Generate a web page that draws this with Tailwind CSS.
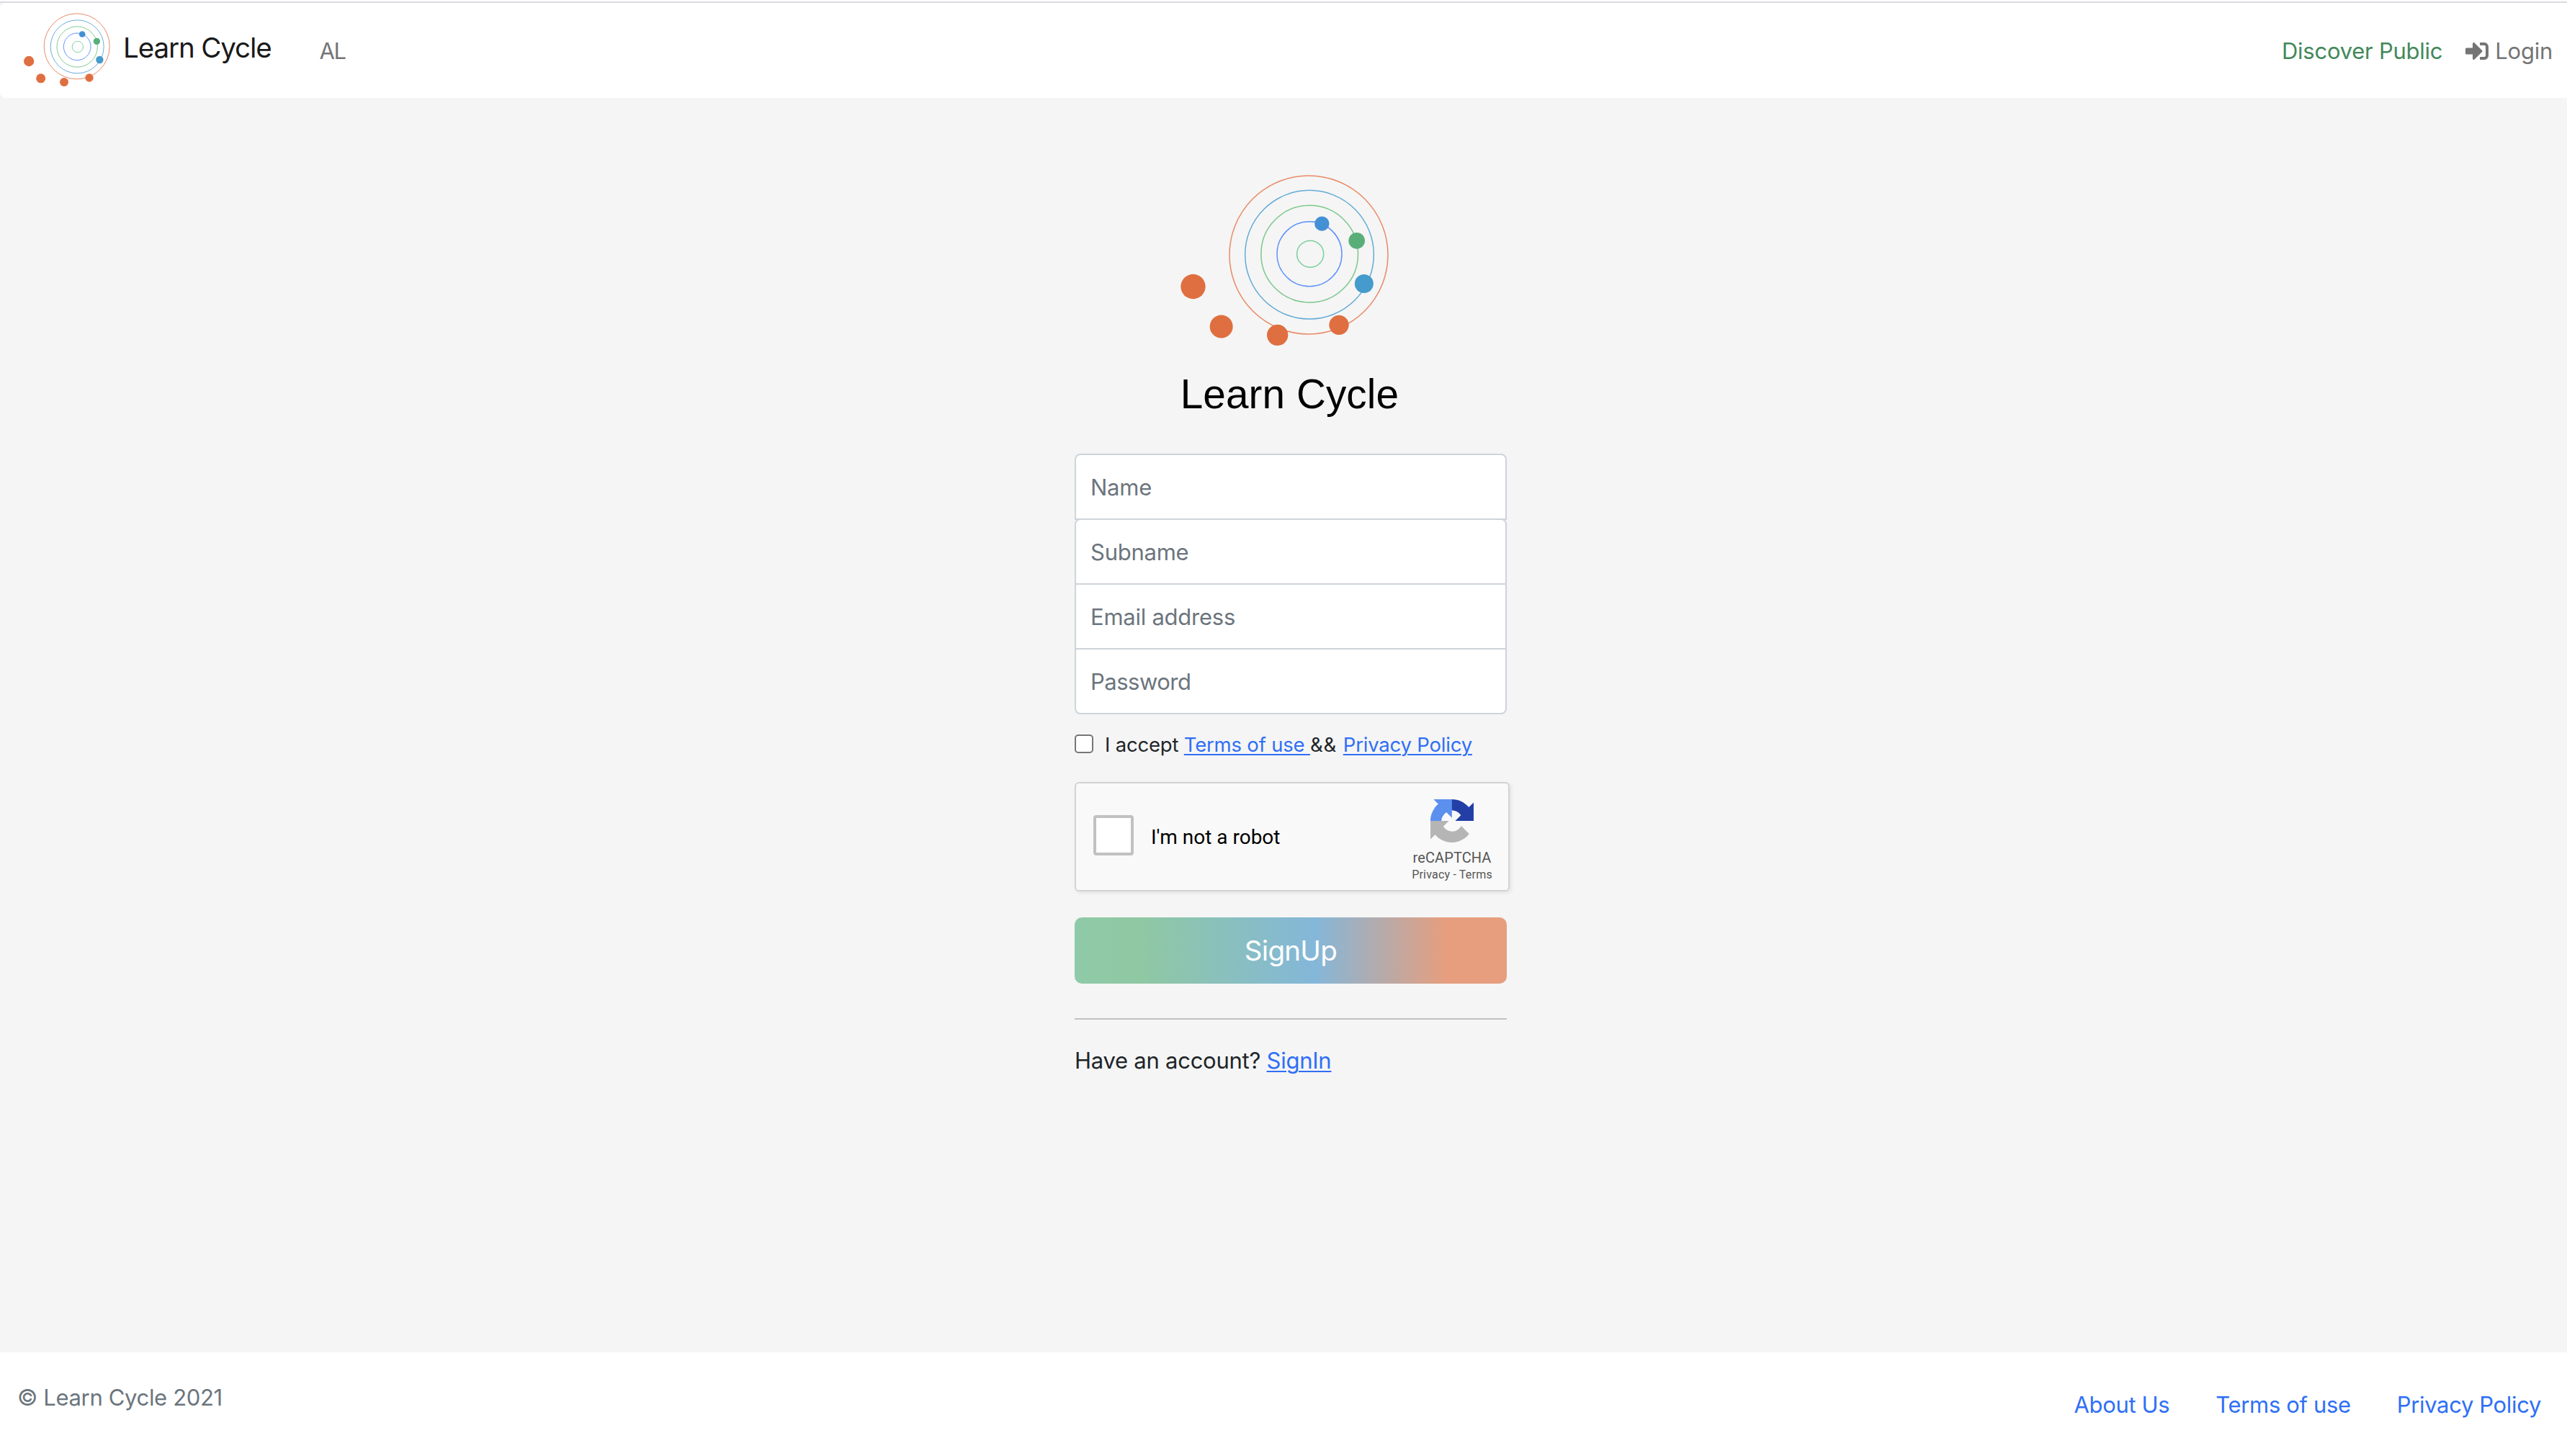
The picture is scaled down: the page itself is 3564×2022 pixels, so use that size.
<!DOCTYPE html>
<html lang="en">
<head>
    <meta charset="UTF-8">
    <meta name="viewport" content="width=device-width, initial-scale=1.0">
    <title>Learn Cycle</title>

    <!-- Tailwind CSS -->
    <script src="https://cdn.jsdelivr.net/npm/@tailwindcss/browser@4"></script>
</head>
<body class="flex min-h-screen flex-col bg-[#f4f4f4] font-['Inter',sans-serif] text-[31px] leading-[48px] tracking-[-0.25px] text-[#212529]">

    <!-- Top line -->
    <div class="h-1 border-b-2 border-[#dadbe3] bg-white"></div>

    <!-- Navbar -->
    <nav class="flex h-[132px] items-center rounded-l-lg bg-white pt-px pr-[20px] pl-[30px]">
        <a href="#" class="flex items-center">
            <svg class="mb-[4px] h-[108px] w-[126px]" viewBox="90 45 378 324" fill="none" stroke-width="3">
                <circle cx="320" cy="193" r="136.5" stroke="#e98a66" />
                <circle cx="321.5" cy="194.5" r="111" stroke="#6bb0d8" />
                <circle cx="321.5" cy="195" r="84.5" stroke="#83cc91" />
                <circle cx="321.5" cy="194.5" r="56.5" stroke="#6296fa" />
                <circle cx="323.5" cy="195" r="23" stroke="#84d4a2" />
                <circle cx="342.5" cy="142.5" r="13" fill="#4490d6" />
                <circle cx="403" cy="172" r="14" fill="#5aaf79" />
                <circle cx="415" cy="249" r="15.5" fill="#459bcb" />
                <circle cx="372" cy="324" r="17" fill="#df6f40" />
                <circle cx="267" cy="342" r="18" fill="#df6f40" />
                <circle cx="170" cy="326.5" r="19.5" fill="#df6f40" />
                <circle cx="120.5" cy="255" r="21.5" fill="#df6f40" />
            </svg>
            <span class="mb-[9px] ml-[15px] text-[38.5px] tracking-[-1.1px] text-[#1a1a1a]">Learn Cycle</span>
        </a>
        <a href="#" class="ml-[67px] tracking-[-1.5px] text-[#757575]">AL</a>

        <div class="ml-auto flex items-center">
            <a href="#" class="text-[#43895a]">Discover Public</a>
            <a href="#" class="ml-[32px] flex items-center text-[#757575]">
                <!-- Login icon -->
                <svg class="mr-[9px] h-8 w-8" viewBox="0 0 512 512" fill="currentColor">
                    <path d="M416 448h-84c-6.6 0-12-5.4-12-12v-40c0-6.6 5.4-12 12-12h84c17.7 0 32-14.3 32-32V160c0-17.7-14.3-32-32-32h-84c-6.6 0-12-5.4-12-12V76c0-6.6 5.4-12 12-12h84c53 0 96 43 96 96v192c0 53-43 96-96 96zm-47-209L201 71c-15-15-41-4.5-41 17v96H24c-13.3 0-24 10.7-24 24v96c0 13.3 10.7 24 24 24h136v96c0 21.5 26 32 41 17l168-168c9.3-9.4 9.3-24.6 0-34z" />
                </svg>
                Login
            </a>
        </div>
    </nav>

    <!-- Sign up form -->
    <main class="flex flex-1 justify-center bg-[#f5f5f5] pt-[84px] pl-5">
        <form class="w-[600px]">
            <svg class="ml-[118px] h-[380px] w-[360px]" viewBox="0 0 1080 1140" fill="none" stroke-width="4.5">
                <circle cx="621" cy="402" r="330" stroke="#e98a66" />
                <circle cx="624" cy="401" r="268" stroke="#63abd6" />
                <circle cx="624.5" cy="398" r="202" stroke="#7cc88b" />
                <circle cx="624" cy="398" r="135" stroke="#5f93f9" />
                <circle cx="627.5" cy="398" r="55.5" stroke="#79cf9a" />
                <circle cx="676" cy="272" r="30.5" fill="#4490d4" />
                <circle cx="821" cy="343" r="34" fill="#5aaf79" />
                <circle cx="851.5" cy="522" r="39" fill="#459bcb" />
                <circle cx="747" cy="694" r="41" fill="#df6f40" />
                <circle cx="491" cy="736" r="44" fill="#df6f40" />
                <circle cx="257" cy="700.5" r="48" fill="#df6f40" />
                <circle cx="139.5" cy="534" r="51.5" fill="#df6f40" />
                <text x="86" y="1042" class="fill-black font-['Liberation_Sans',Arial,sans-serif] text-[170px] tracking-[0.3px]">Learn Cycle</text>
            </svg>

            <div class="mt-[30px] flex flex-col">
                <input type="text" placeholder="Name" class="h-[92px] rounded-t-lg border-2 border-[#ced4da] bg-white px-5 placeholder:text-[#6c757d]">
                <input type="text" placeholder="Subname" class="-mt-[2px] h-[92px] rounded-t-lg border-2 border-[#ced4da] bg-white px-5 placeholder:text-[#6c757d]">
                <input type="email" placeholder="Email address" class="-mt-[2px] h-[92px] border-2 border-[#ced4da] bg-white px-5 placeholder:text-[#6c757d]">
                <input type="password" placeholder="Password" class="-mt-[2px] h-[92px] rounded-b-lg border-2 border-[#ced4da] bg-white px-5 tracking-[-0.5px] placeholder:text-[#6c757d]">
            </div>

            <!-- Terms -->
            <div class="mt-[21px] flex h-[42px] items-center text-[27.5px] leading-[42px] tracking-[-0.2px]">
                <input type="checkbox" class="mt-[-2px] mr-[16px] h-[26px] w-[26px] appearance-none rounded-[5px] border-2 border-[#767676] bg-white">
                <p class="whitespace-pre">I accept <a href="#" class="text-[#2f6ff6] underline decoration-2 underline-offset-[3px]">Terms of use </a><span class="tracking-[0.9px]">&amp;&amp; </span><a href="#" class="text-[#2f6ff6] underline decoration-2 underline-offset-[3px]">Privacy Policy</a></p>
            </div>

            <!-- reCAPTCHA -->
            <div class="mt-[31px] flex h-[152px] w-[604px] items-center rounded-md border-2 border-[#d3d3d3] bg-[#f9f9f9] pr-[19px] pl-[24px] font-['Roboto',sans-serif] tracking-normal shadow-[2px_2px_4px_1px_rgba(0,0,0,0.06)]">
                <div class="mb-[4px] h-14 w-14 rounded-sm border-4 border-[#c1c1c1] bg-white"></div>
                <span class="ml-[24px] pt-px text-[28px] text-black">I'm not a robot</span>
                <div class="ml-auto flex h-full w-[118px] flex-col items-center pt-[22px] text-[#555]">
                    <svg class="h-[60px] w-[60px]" viewBox="0 0 64 64">
                        <path fill="#233fa6" d="M64 31.955l-.033-1.37V4.687l-7.16 7.16C50.948 4.674 42.033.093 32.05.093c-10.4 0-19.622 4.96-25.458 12.64l11.736 11.86a15.55 15.55 0 0 1 4.754-5.334c2.05-1.6 4.952-2.906 8.968-2.906.485 0 .86.057 1.135.163 4.976.393 9.288 3.14 11.828 7.124l-8.307 8.307L64 31.953" />
                        <path fill="#5b90ef" d="M31.862.094l-1.37.033H4.594l7.16 7.16C4.58 13.147 0 22.06 0 32.046c0 10.4 4.96 19.622 12.64 25.458L24.5 45.768a15.55 15.55 0 0 1-5.334-4.754c-1.6-2.05-2.906-4.952-2.906-8.968 0-.485.057-.86.163-1.135.393-4.976 3.14-9.288 7.124-11.828l8.307 8.307L31.86.095" />
                        <path fill="#b5b5b5" d="M.001 32.045l.033 1.37v25.898l7.16-7.16c5.86 7.173 14.774 11.754 24.76 11.754 10.4 0 19.622-4.96 25.458-12.64l-11.736-11.86a15.55 15.55 0 0 1-4.754 5.334c-2.05 1.6-4.952 2.906-8.968 2.906-.485 0-.86-.057-1.135-.163-4.976-.393-9.288-3.14-11.828-7.124l8.307-8.307c-10.522.04-22.4.066-27.295-.005" />
                    </svg>
                    <span class="mt-[11px] text-[20px] leading-[20px] tracking-[0.1px]">reCAPTCHA</span>
                    <span class="mt-[6px] text-[16px] leading-[16px] tracking-[0.2px]">Privacy - Terms</span>
                </div>
            </div>

            <button type="button" class="mt-[36px] block h-[92px] w-full rounded-[10px] bg-[linear-gradient(90deg,#8fcaa8_0%,#8fc8a2_15%,#84b7d9_55.5%,#e69e7e_86%)] text-[38.5px] tracking-[-0.7px] text-white">SignUp</button>

            <div class="mt-[48px] h-[2px] bg-[#c1c1c1]"></div>

            <p class="mt-[33px]">Have an account? <a href="#" class="text-[#2f6ff6] underline decoration-2 underline-offset-[3px]">SignIn</a></p>
        </form>
    </main>

    <!-- Footer -->
    <footer class="flex h-36 items-start justify-between bg-white pt-[39px] pr-[36px] pl-6 tracking-[-0.35px]">
        <span class="text-[#6c757d]">© Learn Cycle 2021</span>
        <div class="mt-[10px] flex gap-16 text-[#2f6ff6]">
            <a href="#">About Us</a>
            <a href="#">Terms of use</a>
            <a href="#">Privacy Policy</a>
        </div>
    </footer>

</body>
</html>
